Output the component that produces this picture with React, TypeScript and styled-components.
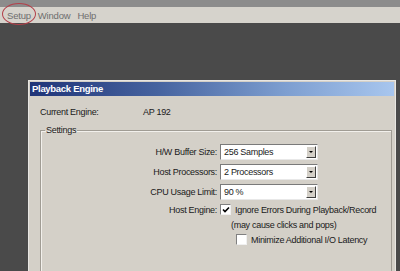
import React from 'react';
import styled, { createGlobalStyle } from 'styled-components';

const GlobalStyle = createGlobalStyle`
  html, body {
    margin: 0;
    padding: 0;
    width: 400px;
    height: 271px;
    overflow: hidden;
    background: #4a4a4a;
  }
  body {
    font-family: 'Liberation Sans', Arial, sans-serif;
  }
`;

const Screen = styled.div`
  width: 400px;
  height: 271px;
  display: flex;
  flex-direction: column;
  background: #4a4a4a;
`;

const TopStrip = styled.div`
  height: 7px;
  background: #8c8c8c;
`;

const MenuBar = styled.div`
  position: relative;
  height: 16px;
  background: #d6d3cc;
  display: flex;
  align-items: center;
  gap: 7px;
  padding-left: 7px;
  font-size: 9.5px;
  letter-spacing: -0.2px;
  color: #6e6e6e;
`;

const MenuItem = styled.span`
  line-height: 16px;
  padding-top: 1px;
`;

const Circle = styled.div`
  position: absolute;
  left: 2px;
  top: -4px;
  width: 32px;
  height: 20px;
  border: 1px solid #b3404a;
  border-radius: 50%;
`;

const Workspace = styled.div`
  flex: 1;
  display: flex;
  padding: 57px 4px 0 28px;
`;

const Dialog = styled.div`
  flex: 1;
  background: #d4d0c8;
  border-top: 1px solid #e8e6e2;
  border-left: 1px solid #e8e6e2;
  border-right: 1px solid #e8e6e2;
  display: flex;
  flex-direction: column;
  font-size: 9px;
  letter-spacing: -0.3px;
  color: #1a1a1a;
`;

const TitleBar = styled.div`
  height: 14px;
  margin: 1px 1px 0 1px;
  background: linear-gradient(90deg, #1f3478 0%, #46639f 35%, #7d9ed0 70%, #a8c6ee 100%);
  color: #fff;
  font-weight: bold;
  font-size: 9.5px;
  letter-spacing: -0.3px;
  line-height: 14px;
  padding-left: 2px;
`;

const Body = styled.div`
  flex: 1;
  display: flex;
  flex-direction: column;
  padding: 10px 3px 0 11px;
`;

const InfoRow = styled.div`
  display: flex;
  height: 12px;
  line-height: 12px;
`;

const InfoLabel = styled.span`
  width: 103px;
`;

const GroupBox = styled.fieldset`
  flex: 1;
  margin: 7px 0 0 0;
  padding: 9px 0 0 0;
  border: 1px solid #a09c94;
  border-bottom: none;
  box-shadow: inset 1px 1px 0 #f2f0ec;
  display: flex;
  flex-direction: column;
  gap: 4px;
`;

const Legend = styled.legend`
  padding: 0 1px;
  margin-left: 4px;
  font-size: 9px;
  line-height: 10px;
`;

const FieldRow = styled.div`
  display: grid;
  grid-template-columns: 176px auto;
  align-items: center;
  column-gap: 3px;
`;

const FieldLabel = styled.span`
  text-align: right;
`;

const Select = styled.div`
  width: 98px;
  height: 16px;
  box-sizing: border-box;
  background: #fff;
  border: 1px solid #7a7a7a;
  border-right-color: #e8e8e8;
  border-bottom-color: #e8e8e8;
  display: flex;
  align-items: center;
  padding-left: 3px;
  padding-right: 1px;
`;

const SelectText = styled.span`
  flex: 1;
`;

const ArrowButton = styled.span`
  width: 10px;
  height: 12px;
  box-sizing: border-box;
  background: #d4d0c8;
  border: 1px solid #fff;
  border-right-color: #404040;
  border-bottom-color: #404040;
  display: flex;
  align-items: center;
  justify-content: center;
`;

const Arrow = styled.span`
  width: 0;
  height: 0;
  border-left: 2px solid transparent;
  border-right: 2px solid transparent;
  border-top: 2px solid #000;
`;

const CheckLine = styled.div<{ $indent: number }>`
  display: flex;
  align-items: center;
  gap: 4px;
  padding-left: ${p => p.$indent}px;
`;

const Box = styled.span`
  width: 11px;
  height: 11px;
  box-sizing: border-box;
  background: #fff;
  border: 1px solid #808080;
  border-right-color: #f0f0f0;
  border-bottom-color: #f0f0f0;
  display: flex;
  align-items: center;
  justify-content: center;
`;

const Note = styled.div`
  padding-left: 190px;
  margin-top: 1px;
`;

const Check = () => (
  <svg width="8" height="8" viewBox="0 0 8 8">
    <path d="M1 3.5 L3 5.5 L7 1.5" stroke="#000" strokeWidth="1.6" fill="none" />
  </svg>
);

const Dropdown = ({ value }: { value: string }) => (
  <Select>
    <SelectText>{value}</SelectText>
    <ArrowButton>
      <Arrow />
    </ArrowButton>
  </Select>
);

export default function App() {
  return (
    <Screen>
      <GlobalStyle />
      <TopStrip />
      <MenuBar>
        <MenuItem>Setup</MenuItem>
        <MenuItem>Window</MenuItem>
        <MenuItem>Help</MenuItem>
        <Circle />
      </MenuBar>
      <Workspace>
        <Dialog>
          <TitleBar>Playback Engine</TitleBar>
          <Body>
            <InfoRow>
              <InfoLabel>Current Engine:</InfoLabel>
              <span>AP 192</span>
            </InfoRow>
            <GroupBox>
              <Legend>Settings</Legend>
              <FieldRow>
                <FieldLabel>H/W Buffer Size:</FieldLabel>
                <Dropdown value="256 Samples" />
              </FieldRow>
              <FieldRow>
                <FieldLabel>Host Processors:</FieldLabel>
                <Dropdown value="2 Processors" />
              </FieldRow>
              <FieldRow>
                <FieldLabel>CPU Usage Limit:</FieldLabel>
                <Dropdown value="90 %" />
              </FieldRow>
              <FieldRow>
                <FieldLabel>Host Engine:</FieldLabel>
                <CheckLine $indent={0}>
                  <Box>
                    <Check />
                  </Box>
                  <span>Ignore Errors During Playback/Record</span>
                </CheckLine>
              </FieldRow>
              <Note>(may cause clicks and pops)</Note>
              <CheckLine $indent={195}>
                <Box />
                <span>Minimize Additional I/O Latency</span>
              </CheckLine>
            </GroupBox>
          </Body>
        </Dialog>
      </Workspace>
    </Screen>
  );
}
